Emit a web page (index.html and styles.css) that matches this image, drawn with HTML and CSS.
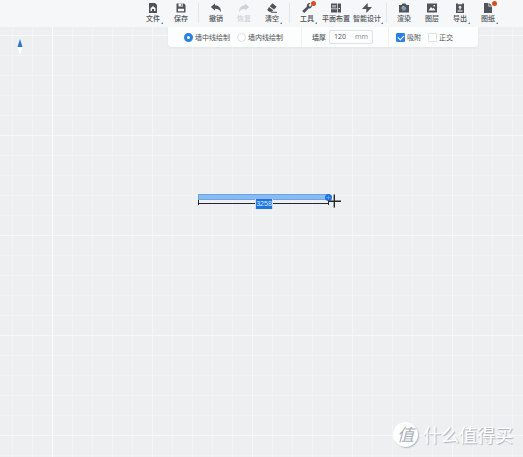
FILE: index.html
```html
<!DOCTYPE html>
<html lang="zh-CN">

<head>
    <meta charset="UTF-8" />
    <meta name="viewport" content="width=device-width, initial-scale=1.0" />
    <title>户型绘制</title>
    <link rel="stylesheet" href="styles.css">
</head>

<body>
    <header class="toolbar">
        <div class="group">
            <button class="tool more" type="button">
                <svg viewBox="0 0 12 12"><path d="M2 1h6l2 2v8H2z" /><path class="cut" d="M6 4L3.500 6.300V9H5V7h2v2h1.500V6.300z" /></svg>
                <span>文件</span>
            </button>
            <button class="tool" type="button">
                <svg viewBox="0 0 12 12"><path d="M1.500 1.500h7.500l1.500 1.500v7.500h-9z" /><path class="cut" d="M3.500 1.500h4.500v3H3.500zM3 6.800h6v2.500H3z" /><path d="M6.300 2h1v2h-1z" /></svg>
                <span>保存</span>
            </button>
        </div>
        <div class="group">
            <button class="tool" type="button">
                <svg viewBox="0 0 12 12"><path d="M5 1.500L.8 5 5 8.500V6.800c2.800 0 4.700.7 6 3.400 0-4-2-6.700-6-6.900z" /></svg>
                <span>撤销</span>
            </button>
            <button class="tool" type="button" disabled>
                <svg viewBox="0 0 12 12"><path d="M7 1.500L11.200 5 7 8.500V6.800c-2.800 0-4.700.7-6 3.400 0-4 2-6.700 6-6.900z" /></svg>
                <span>恢复</span>
            </button>
            <button class="tool more" type="button">
                <svg viewBox="0 0 12 12"><path d="M6.500 1.300l4.200 3.500L8 7.500 3.700 4.300zM3 5l4.200 3.300-1.200 1.500H3.200L1.200 8zM6 9.800h5v1H4z" /></svg>
                <span>清空</span>
            </button>
        </div>
        <div class="group">
            <button class="tool more" type="button">
                <svg viewBox="0 0 12 12"><path d="M9.500 1.200L7.800 3l.2 1.200 1.300.2 1.600-1.700c.6 2-.9 4-3.200 3.700L3.200 11 1.200 9l4.600-4.300C5.400 2.500 7.400.6 9.500 1.200z" /></svg>
                <span>工具</span>
                <i class="dot"></i>
            </button>
            <button class="tool layout" type="button">
                <svg viewBox="0 0 12 12"><path d="M1 1.500h6v5H1zM7.700 1.500H11v9H7.700zM1 7.200h6v3.300H1z" /><path class="cut" d="M2 3h4v.6H2zM2 4.600h4v.6H2zM8.500 6h1.500v1H8.500z" /></svg>
                <span>平面布置</span>
            </button>
            <button class="tool smart more" type="button">
                <svg viewBox="0 0 12 12"><path d="M6.700 1v4H11l-5.700 6V7H1z" /></svg>
                <span>智能设计</span>
            </button>
        </div>
        <div class="group">
            <button class="tool" type="button">
                <svg viewBox="0 0 12 12"><path d="M1 3h2.500l1-1.500h3l1 1.500H11v7.500H1z" /><circle class="lens" cx="6" cy="6.500" r="2.200" /><path class="lens-arc" d="M3.800 6.500A2.200 2.200 0 0 1 6 4.300" /></svg>
                <span>渲染</span>
            </button>
            <button class="tool" type="button">
                <svg viewBox="0 0 12 12"><path d="M1 1.500h10v9H1z" /><path class="cut" d="M2.500 8.500L5 5l1.500 1.800 1-1L9.500 8.500zM7.500 3H9v1.500H7.500z" /></svg>
                <span>图层</span>
            </button>
            <button class="tool more" type="button">
                <svg viewBox="0 0 12 12"><path d="M2 1.500h8V11H2z" /><path class="cut" d="M4 1h4v1.200H4zM6 3.500l2 2H6.700v2H5.300v-2H4zM3.500 8.500h5v1h-5z" /></svg>
                <span>导出</span>
            </button>
            <button class="tool more" type="button">
                <svg viewBox="0 0 12 12"><path d="M2 1h4.500v3.500H10V11H2z" /><path d="M7.200 1L10 3.800H7.200z" /></svg>
                <span>图纸</span>
                <i class="dot"></i>
            </button>
        </div>
    </header>

    <main class="canvas">
        <form class="options">
            <div class="option-group line-mode">
                <label><input type="radio" name="mode" checked />墙中线绘制</label>
                <label><input type="radio" name="mode" />墙内线绘制</label>
            </div>
            <div class="option-group thickness">
                <label for="thickness">墙厚</label>
                <div class="field">
                    <input id="thickness" type="text" value="120" />
                    <span>mm</span>
                </div>
            </div>
            <div class="option-group snapping">
                <label><input type="checkbox" checked />吸附</label>
                <label><input type="checkbox" />正交</label>
            </div>
        </form>

        <svg class="compass" viewBox="0 0 6 16">
            <path class="north" d="M3 0l2.500 8h-5z" />
            <path class="south" d="M.5 8h5L3 16z" />
        </svg>

        <!-- wall being drawn, its dimension line and the cursor -->
        <div class="wall">
            <svg viewBox="0 0 146 18">
                <rect class="wall-body" x="1.500" y="2.500" width="130" height="5" />
                <path class="dimension" d="M1.500 8v5M1 11.500h131M131.500 8v5" />
                <circle class="handle" cx="131.500" cy="5.500" r="3.500" />
                <path class="handle-mark" d="M131.500 3.500v4M129.500 5.500h4" />
                <path class="cursor" d="M137.300 2.500v13M131 9.300h13" />
            </svg>
            <input class="wall-length" type="text" value="3258" aria-label="墙长" />
        </div>

        <div class="watermark">
            <span class="watermark-logo">值</span>
            <span>什么值得买</span>
        </div>
    </main>
</body>

</html>
```

FILE: styles.css
```css
* {
    box-sizing: border-box;
}

body {
    margin: 0;
    min-height: 100vh;
    display: flex;
    flex-direction: column;
    font-family: "Noto Sans CJK SC", sans-serif;
    font-size: 7px;
    line-height: 10px;
    color: #505357;
}

button,
input {
    font: inherit;
    color: inherit;
}

.toolbar {
    display: flex;
    justify-content: flex-end;
    height: 27px;
    padding-right: 21px;
    background: #f5f7f9;
}

.group {
    position: relative;
    display: flex;
}

.group + .group {
    padding-left: 7px;
}

.group + .group::before {
    content: "";
    position: absolute;
    left: 3px;
    top: 3px;
    bottom: 4px;
    width: 1px;
    background: #e4e7ea;
}

.tool {
    position: relative;
    display: flex;
    flex-direction: column;
    align-items: center;
    width: 28px;
    padding: 2px 0 0;
    border: 0;
    background: none;
    color: #505357;
    font-weight: 500;
    line-height: 8px;
    white-space: nowrap;
}

.tool.layout {
    width: 30px;
}

.tool.smart {
    width: 32px;
}

.tool svg {
    width: 12px;
    height: 12px;
    fill: currentColor;
}

.tool .cut {
    fill: #f5f7f9;
}

.tool .lens {
    fill: #6f9fc8;
}

.tool .lens-arc {
    fill: none;
    stroke: #e8b33c;
}

.tool:disabled {
    color: #cfd2d5;
}

.tool.more::after {
    content: "";
    position: absolute;
    right: 4px;
    bottom: 3px;
    border: 1px solid;
    border-color: transparent #777 #777 transparent;
}

.tool.smart::after {
    right: 0;
}

.dot {
    position: absolute;
    top: 1px;
    right: 5px;
    width: 5px;
    height: 5px;
    border-radius: 50%;
    background: #d4501e;
}

.canvas {
    position: relative;
    flex: 1;
    background-color: #edeff1;
    background-image:
        linear-gradient(#fcfdfd, #fcfdfd),
        linear-gradient(90deg, #f4f6f7 1px, transparent 1px),
        linear-gradient(#f5f7f8 1px, transparent 1px),
        linear-gradient(90deg, #f1f3f4 1px, transparent 1px),
        linear-gradient(#f1f3f4 1px, transparent 1px);
    background-size: 1px 100%, 100px 100px, 100px 100px, 20px 20px, 20px 20px;
    background-position: 52px 0, 52px 8px, 52px 8px, 12px 8px, 12px 8px;
    background-repeat: no-repeat, repeat, repeat, repeat, repeat;
}

.options {
    display: flex;
    align-items: center;
    width: 310px;
    height: 20px;
    margin: 0 45px 0 auto;
    border-radius: 0 0 4px 4px;
    background: #fcfdfd;
    box-shadow: 0 1px 2px #e3e5e8;
}

.option-group {
    display: flex;
    align-items: center;
    height: 20px;
}

.option-group + .option-group {
    border-left: 1px solid #eff1f3;
}

.option-group label {
    display: flex;
    align-items: center;
    gap: 2px;
}

.line-mode {
    width: 133px;
    padding-left: 16px;
    gap: 7px;
}

.thickness {
    width: 87px;
    padding-left: 10px;
    gap: 3px;
}

.thickness label {
    font-weight: 500;
}

.snapping {
    padding-left: 7px;
    gap: 7px;
}

input[type="radio"],
input[type="checkbox"] {
    appearance: none;
    width: 9px;
    height: 9px;
    margin: 0;
    border: 1px solid #dfe2e5;
    background: #fff;
}

input[type="radio"] {
    border-radius: 50%;
}

input[type="radio"]:checked {
    border: 3px solid #2680e6;
}

input[type="checkbox"] {
    position: relative;
    border-radius: 1px;
}

input[type="checkbox"]:checked {
    border-color: #2680e6;
    background: #2680e6;
}

input[type="checkbox"]:checked::after {
    content: "";
    position: absolute;
    left: 2px;
    top: 0;
    width: 3px;
    height: 5px;
    border: solid #fff;
    border-width: 0 1px 1px 0;
    transform: rotate(45deg);
}

.field {
    display: flex;
    align-items: center;
    width: 44px;
    height: 14px;
    padding: 0 4px;
    border: 1px solid #e0e3e6;
    border-radius: 2px;
    font-family: "Open Sans", sans-serif;
}

.field input {
    flex: 1;
    min-width: 0;
    padding: 0;
    border: 0;
    background: none;
    outline: 0;
}

.field span {
    color: #85888c;
}

.compass {
    position: absolute;
    left: 17px;
    top: 12px;
    width: 6px;
    height: 16px;
}

.north {
    fill: #2878d0;
}

.south {
    fill: #fff;
}

.wall {
    position: absolute;
    left: 197px;
    top: 165px;
    width: 146px;
}

.wall svg {
    display: block;
    width: 146px;
    height: 18px;
}

.wall-body {
    fill: #86bbf5;
    stroke: #6fa4df;
}

.dimension,
.cursor {
    fill: none;
    stroke: #25282c;
}

.cursor {
    stroke-width: 1.4;
}

.handle {
    fill: #2070dc;
}

.handle-mark {
    fill: none;
    stroke: #5c9cee;
}

.wall-length {
    position: absolute;
    left: 58px;
    top: 7px;
    width: 18px;
    height: 10px;
    padding: 0;
    border: solid #c9dff7;
    border-width: 0 1px;
    background: #1f75df;
    color: #d8e9fd;
    font-family: "Liberation Sans", sans-serif;
    text-align: center;
}

.watermark {
    position: absolute;
    right: 10px;
    bottom: 10px;
    display: flex;
    align-items: center;
    gap: 5px;
    color: #fff;
    font-size: 18px;
    line-height: 26px;
    text-shadow: 1px 1px 1px #a9afb8;
}

.watermark-logo {
    width: 25px;
    height: 25px;
    border-radius: 50%;
    background: #fff;
    box-shadow: 1px 1px 1px #b5bac2;
    color: #a9b0ba;
    font-size: 17px;
    font-style: italic;
    line-height: 24px;
    text-align: center;
    text-shadow: none;
}
```
